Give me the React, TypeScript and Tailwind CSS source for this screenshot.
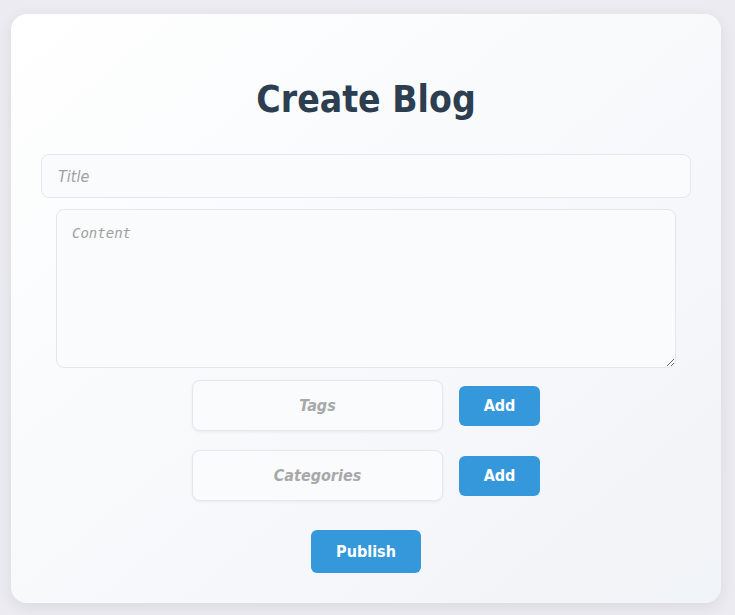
import React from "react";

export default function App() {
  const font = { fontFamily: '"DejaVu Sans Condensed", "DejaVu Sans", Verdana, sans-serif' };
  return (
    <div
      className="min-h-[615px] w-full bg-[#ebebf1] px-[11px] pt-[14px] pb-[12px]"
      style={font}
    >
      <div className="flex h-[589px] w-[710px] flex-col items-center rounded-[16px] bg-gradient-to-br from-[#ffffff] to-[#f0f3f7] px-[30px] pt-[66px] shadow-[0_4px_16px_rgba(0,0,0,0.08)]">
        <h1 className="text-[37px] font-bold leading-[40px] text-[#2c3e50]">Create Blog</h1>
        <input
          placeholder="Title"
          className="mt-[34px] h-[44px] w-[650px] rounded-[8px] border border-[#e2e8f0] bg-[#fafbfd] px-[16px] text-[16px] italic outline-none placeholder:text-[#a0a0a0]"
        />
        <textarea
          placeholder="Content"
          className="mt-[11px] h-[159px] w-[620px] rounded-[8px] border border-[#e2e8f0] bg-[#fafbfd] px-[15px] py-[13px] text-[14px] italic outline-none placeholder:text-[#a0a0a0]"
          style={{ fontFamily: '"DejaVu Sans Mono", monospace' }}
        />
        <div className="mt-[12px] flex items-center gap-[16px]">
          <input
            placeholder="Tags"
            className="h-[51px] w-[251px] rounded-[8px] border border-[#e2e8f0] bg-[#fafbfd] text-center text-[16px] font-bold italic shadow-[0_1px_3px_rgba(0,0,0,0.06)] outline-none placeholder:text-[#a8a8a8]"
          />
          <button className="h-[40px] w-[81px] rounded-[6px] bg-[#3498db] text-[16px] font-bold text-white">
            Add
          </button>
        </div>
        <div className="mt-[19px] flex items-center gap-[16px]">
          <input
            placeholder="Categories"
            className="h-[51px] w-[251px] rounded-[8px] border border-[#e2e8f0] bg-[#fafbfd] text-center text-[16px] font-bold italic shadow-[0_1px_3px_rgba(0,0,0,0.06)] outline-none placeholder:text-[#a8a8a8]"
          />
          <button className="h-[40px] w-[81px] rounded-[6px] bg-[#3498db] text-[16px] font-bold text-white">
            Add
          </button>
        </div>
        <button className="mt-[29px] h-[43px] w-[110px] rounded-[6px] bg-[#3498db] text-[16px] font-bold text-white">
          Publish
        </button>
      </div>
    </div>
  );
}
